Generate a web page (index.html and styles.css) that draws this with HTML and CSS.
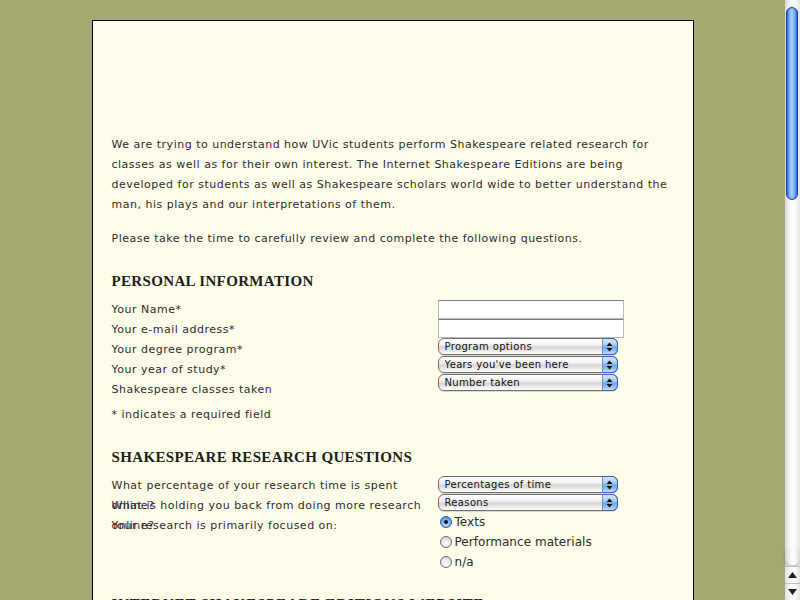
FILE: index.html
```html
<!DOCTYPE html>
<html lang="en">
<head>
<meta charset="utf-8">
<title>Shakespeare Research Survey</title>
<link rel="stylesheet" href="styles.css">
</head>
<body>
<div class="page">
  <div class="header"></div>
  <p>We are trying to understand how UVic students perform Shakespeare related research for classes as well as for their own interest. The Internet Shakespeare Editions are being developed for students as well as Shakespeare scholars world wide to better understand the man, his plays and our interpretations of them.</p>
  <p>Please take the time to carefully review and complete the following questions.</p>

  <h2>Personal Information</h2>
  <div class="form-grid">
    <div class="labels">
      <div class="label">Your Name*</div>
      <div class="label">Your e-mail address*</div>
      <div class="label">Your degree program*</div>
      <div class="label">Your year of study*</div>
      <div class="label">Shakespeare classes taken</div>
    </div>
    <div class="controls">
      <input class="text-input" type="text">
      <input class="text-input" type="text">
      <span class="popup"><select class="popup-select"><option>Program options</option></select><span class="popup-btn"><svg width="7" height="10" viewBox="0 0 7 10"><path d="M3.5 0.5 L6.5 4 L0.5 4 Z M0.5 6 L6.5 6 L3.5 9.5 Z" fill="#111"/></svg></span></span>
      <span class="popup"><select class="popup-select"><option>Years you've been here</option></select><span class="popup-btn"><svg width="7" height="10" viewBox="0 0 7 10"><path d="M3.5 0.5 L6.5 4 L0.5 4 Z M0.5 6 L6.5 6 L3.5 9.5 Z" fill="#111"/></svg></span></span>
      <span class="popup"><select class="popup-select"><option>Number taken</option></select><span class="popup-btn"><svg width="7" height="10" viewBox="0 0 7 10"><path d="M3.5 0.5 L6.5 4 L0.5 4 Z M0.5 6 L6.5 6 L3.5 9.5 Z" fill="#111"/></svg></span></span>
    </div>
  </div>
  <p class="note">* indicates a required field</p>

  <h2>Shakespeare Research Questions</h2>
  <div class="form-grid">
    <div class="labels">
      <div class="label fixed">What percentage of your research time is spent online?</div>
      <div class="label fixed">What is holding you back from doing more research online?</div>
      <div class="label fixed">Your research is primarily focused on:</div>
    </div>
    <div class="controls">
      <span class="popup"><select class="popup-select"><option>Percentages of time</option></select><span class="popup-btn"><svg width="7" height="10" viewBox="0 0 7 10"><path d="M3.5 0.5 L6.5 4 L0.5 4 Z M0.5 6 L6.5 6 L3.5 9.5 Z" fill="#111"/></svg></span></span>
      <span class="popup"><select class="popup-select"><option>Reasons</option></select><span class="popup-btn"><svg width="7" height="10" viewBox="0 0 7 10"><path d="M3.5 0.5 L6.5 4 L0.5 4 Z M0.5 6 L6.5 6 L3.5 9.5 Z" fill="#111"/></svg></span></span>
      <label class="radio"><span class="radio-dot checked"></span>Texts</label>
      <label class="radio"><span class="radio-dot"></span>Performance materials</label>
      <label class="radio"><span class="radio-dot"></span>n/a</label>
    </div>
  </div>

  <h2 class="last">Internet Shakespeare Editions Website</h2>
  <p>Please tell us about your use of the Internet Shakespeare Editions website.</p>
</div>

<div class="scrollbar">
  <div class="sb-track">
    <div class="sb-thumb"></div>
  </div>
  <div class="sb-end"></div>
  <div class="sb-btn sb-up"><svg width="9" height="6" viewBox="0 0 9 6"><path d="M4.5 0 L9 6 L0 6 Z" fill="#222"/></svg></div>
  <div class="sb-btn sb-down"><svg width="9" height="6" viewBox="0 0 9 6"><path d="M0 0 L9 0 L4.5 6 Z" fill="#222"/></svg></div>
</div>
</body>
</html>
```
FILE: styles.css
```css
html, body {
  margin: 0;
  padding: 0;
  height: 100%;
  overflow: hidden;
}

body {
  background: #a5a872;
  padding-right: 15px;
  box-sizing: border-box;
  font-family: "DejaVu Sans", Verdana, sans-serif;
  font-size: 11px;
  color: #2e2e2e;
  letter-spacing: 0.5px;
}

.page {
  width: 562px;
  margin: 20px auto 0;
  padding: 0 19px 40px;
  background: #fdfde9;
  border: 1px solid #000;
}

.header {
  height: 100px;
}

p {
  margin: 14px 0;
  line-height: 20px;
}

h2 {
  font-family: "Liberation Serif", "Times New Roman", serif;
  font-size: 15px;
  font-weight: bold;
  text-transform: uppercase;
  color: #1e1e1e;
  line-height: 20px;
  margin: 22px 0 9px;
  letter-spacing: 0.35px;
}

h2.last {
  margin-top: 22px;
  letter-spacing: 0.8px;
}

.form-grid {
  display: grid;
  grid-template-columns: 320px 186px;
  column-gap: 6px;
  align-items: start;
}

.labels {
  display: flex;
  flex-direction: column;
}

.label {
  line-height: 20px;
}

.label.fixed {
  height: 20px;
  overflow: visible;
}

.controls {
  display: flex;
  flex-direction: column;
  align-items: flex-start;
}

.note {
  margin: 5px 0 22px;
}

.text-input {
  width: 186px;
  height: 19px;
  box-sizing: border-box;
  margin: 0;
  padding: 0;
  background: #fff;
  border: 1px solid #b9b9b9;
  border-top-color: #7d7d7d;
  outline: none;
}

.popup {
  position: relative;
  display: block;
  width: 180px;
  height: 18px;
}

.popup-select {
  appearance: none;
  -webkit-appearance: none;
  width: 180px;
  height: 17px;
  box-sizing: border-box;
  margin: 0;
  padding: 0 0 0 6px;
  border: 1px solid #6f6f6f;
  border-radius: 6px;
  background: linear-gradient(#ffffff 0%, #f2f2f2 40%, #d6d6d6 55%, #ececec 80%, #ffffff 100%);
  font-family: "DejaVu Sans", Verdana, sans-serif;
  font-size: 10px;
  letter-spacing: 0.35px;
  color: #111;
  line-height: 15px;
  box-shadow: 0 1px 1px rgba(0,0,0,0.15);
}

.popup-btn {
  position: absolute;
  top: 0;
  right: 0;
  width: 16px;
  height: 17px;
  box-sizing: border-box;
  border: 1px solid #3b64b8;
  border-left-color: #6b8ed0;
  border-radius: 0 6px 6px 0;
  background: linear-gradient(#d6e8fb 0%, #a9cdf5 40%, #6aa8ee 55%, #8fc2f7 80%, #c9e3fc 100%);
  display: flex;
  align-items: center;
  justify-content: center;
}

.radio {
  display: flex;
  align-items: center;
  height: 20px;
  padding-left: 2px;
  font-size: 12px;
  letter-spacing: 0.05px;
}

.radio-dot {
  width: 12px;
  height: 12px;
  box-sizing: border-box;
  border-radius: 50%;
  border: 1px solid #6b6b6b;
  background: radial-gradient(circle at 50% 70%, #ffffff 0%, #f0f0f0 40%, #c8c8c8 100%);
  margin-right: 3px;
  display: flex;
  align-items: center;
  justify-content: center;
}

.radio-dot.checked {
  border-color: #2c57b0;
  background: radial-gradient(circle at 50% 70%, #c8e2fd 0%, #79b3f2 50%, #3a7fdc 100%);
}

.radio-dot.checked::after {
  content: "";
  width: 4px;
  height: 4px;
  border-radius: 50%;
  background: #111;
}

/* Aqua-style scrollbar overlay */
.scrollbar {
  position: fixed;
  top: 0;
  right: 0;
  width: 15px;
  height: 100%;
  display: flex;
  flex-direction: column;
  background: linear-gradient(90deg, #d8d8d8 0%, #f6f6f6 30%, #ffffff 55%, #e6e6e6 100%);
}

.sb-track {
  flex: 1;
  padding-top: 7px;
  padding-left: 1px;
}

.sb-thumb {
  width: 12px;
  height: 193px;
  box-sizing: border-box;
  border: 1px solid #1a3fa6;
  border-radius: 7px;
  background: linear-gradient(90deg, #2e6fd8 0%, #7fb3f4 25%, #a9cff9 50%, #6aa4ef 80%, #3c78da 100%);
  box-shadow: inset 0 0 2px rgba(10,40,140,0.5);
}

.sb-end {
  height: 16px;
  border-radius: 0 0 7px 7px;
  background: linear-gradient(90deg, #d0d0d0 0%, #f8f8f8 40%, #ffffff 60%, #dcdcdc 100%);
  box-shadow: 0 2px 3px rgba(0,0,0,0.25);
  margin-bottom: 1px;
}

.sb-btn {
  height: 16px;
  display: flex;
  align-items: center;
  justify-content: center;
  border-top: 1px solid #bdbdbd;
  background: linear-gradient(90deg, #e2e2e2 0%, #fafafa 40%, #ffffff 60%, #e4e4e4 100%);
}

.sb-down {
  height: 16px;
}
```
